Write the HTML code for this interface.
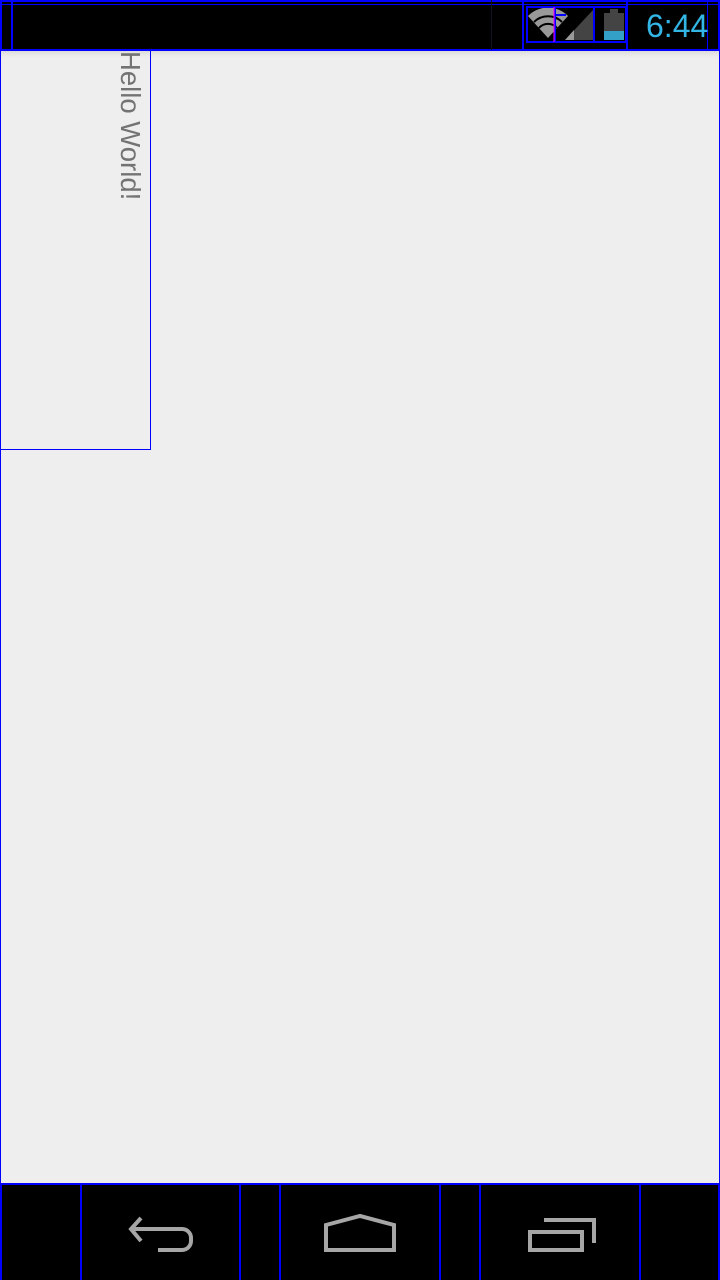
<!DOCTYPE html>
<html><head><style>
body{margin:0;width:720px;height:1280px;position:relative;overflow:hidden;background:#eee;font-family:"Liberation Sans",sans-serif}
.a{position:absolute;box-sizing:border-box}
.b{border:2px solid #00f}
.t{border:1px solid #00f}
</style></head><body>
<div class="a" style="left:0;top:0;width:720px;height:51px;background:#000"></div>
<div class="a" style="left:0;top:51px;width:720px;height:6px;background:linear-gradient(#ddd,#eee)"></div>
<div class="a b" style="left:0;top:0;width:720px;height:51px"></div>
<div class="a" style="left:0;top:4px;width:720px;height:1px;background:#00f"></div>
<div class="a" style="left:11px;top:0;width:2px;height:50px;background:#00f"></div>
<div class="a" style="left:491px;top:0;width:1px;height:50px;background:#112"></div>
<div class="a" style="left:522px;top:0;width:2px;height:50px;background:#00f"></div>
<div class="a" style="left:626px;top:0;width:2px;height:50px;background:#00f"></div>
<div class="a" style="left:707px;top:0;width:1px;height:50px;background:#00f"></div>
<svg class="a" style="left:520px;top:0" width="110" height="50">
<path d="M8 16 A28 28 0 0 1 48 16 L28 38 Z" fill="#999"/>
<path d="M14 22 A20 20 0 0 1 42 22" stroke="#000" stroke-width="2" fill="none"/>
<path d="M19 28 A12 12 0 0 1 37 28" stroke="#000" stroke-width="2" fill="none"/>
<path d="M45 40 L73 10 L73 40 Z" fill="#444"/>
<path d="M45 40 L54 30 L54 40 Z" fill="#999"/>
<rect x="84" y="13" width="20" height="27" fill="#444"/><rect x="90" y="9" width="8" height="4" fill="#444"/>
<rect x="84" y="31" width="20" height="9" fill="#33a0c8"/>
<rect x="7" y="7" width="99" height="35" fill="none" stroke="#00f" stroke-width="2"/>
<line x1="35" y1="7" x2="35" y2="42" stroke="#00f" stroke-width="2"/>
<line x1="34" y1="7" x2="34" y2="42" stroke="#f0f" stroke-width="1"/>
<line x1="74" y1="7" x2="74" y2="42" stroke="#00f" stroke-width="2"/>
<line x1="35" y1="15" x2="46" y2="15" stroke="#00f" stroke-width="2"/>
</svg>
<div class="a" style="left:646px;top:8px;font-size:32px;color:#33b5e5">6:44</div>
<div class="a t" style="left:0;top:50px;width:720px;height:1134px"></div>
<div class="a t" style="left:0;top:50px;width:151px;height:400px"></div>
<div class="a" style="left:146px;top:51px;transform-origin:0 0;transform:rotate(90deg);font-size:27.5px;color:#737373;white-space:nowrap">Hello World!</div>
<div class="a" style="left:0;top:1183px;width:720px;height:97px;background:#000;border:2px solid #00f;border-bottom:none"></div>
<div class="a" style="left:80px;top:1183px;width:2px;height:97px;background:#00f"></div>
<div class="a" style="left:239px;top:1183px;width:2px;height:97px;background:#00f"></div>
<div class="a" style="left:279px;top:1183px;width:2px;height:97px;background:#00f"></div>
<div class="a" style="left:439px;top:1183px;width:2px;height:97px;background:#00f"></div>
<div class="a" style="left:479px;top:1183px;width:2px;height:97px;background:#00f"></div>
<div class="a" style="left:639px;top:1183px;width:2px;height:97px;background:#00f"></div>
<svg class="a" style="left:0;top:1183px" width="720" height="97">
<g stroke="#a6a6a6" stroke-width="4" fill="none">
<path d="M141 35 L131 46 L141 58"/>
<path d="M130 46 H182 A9 9 0 0 1 191 55 V58 A9 9 0 0 1 182 67 H158"/>
<path d="M326 42 L360 33 L394 42 V67 H326 Z"/>
<rect x="530" y="49" width="52" height="18"/>
<path d="M544 37 H594 V60"/>
</g></svg>
</body></html>
